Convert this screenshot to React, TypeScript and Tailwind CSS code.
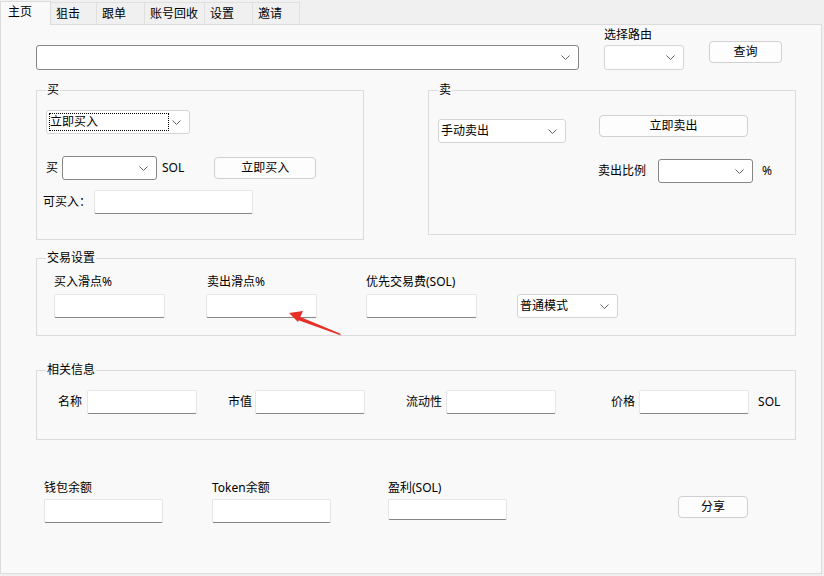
import type { ReactNode } from 'react'

const font = { fontFamily: '"Segoe UI", "Noto Sans", "Noto Sans CJK SC", sans-serif' }

function Chevron() {
  return (
    <svg width="9" height="5" viewBox="0 0 9 5" className="shrink-0">
      <path d="M0.5 0.5 L4.5 4.5 L8.5 0.5" fill="none" stroke="#606060" strokeWidth="1" />
    </svg>
  )
}

// editable combo: darker border; dropdown-list combo: light border
function Combo({ w, h = 24, text, dark, focus }: { w: string; h?: number; text?: string; dark?: boolean; focus?: boolean }) {
  return (
    <div
      className={`${w} ${h === 25 ? 'h-[25px]' : 'h-[24px]'} shrink-0 flex items-center justify-between bg-white rounded-[3px] border pl-[2px] pr-[8px] ${
        dark ? 'border-[#868686]' : 'border-[#d5d5d5]'
      }`}
    >
      {focus ? (
        <span className="h-[18px] w-[120px] border border-dotted border-black flex items-center leading-none">{text}</span>
      ) : (
        <span className="leading-none">{text}</span>
      )}
      <Chevron />
    </div>
  )
}

function Input({ w, short }: { w: string; short?: boolean }) {
  return (
    <div className={`${w} ${short ? 'h-[21px]' : 'h-[24px]'} shrink-0 bg-white border border-[#e6e6e6] border-b-[#858585] rounded-[2px]`} />
  )
}

function Button({ w, children }: { w: string; children: ReactNode }) {
  return (
    <div className={`${w} h-[22px] shrink-0 flex items-center justify-center bg-[#fdfdfd] border border-[#d0d0d0] rounded-[4px]`}>
      {children}
    </div>
  )
}

function Group({ title, className, children }: { title: string; className: string; children: ReactNode }) {
  return (
    <div className={`relative shrink-0 border border-[#dcdcdc] ${className}`}>
      <span className="absolute -top-[9px] left-[9px] px-[1px] bg-[#f9f9f9] leading-[16px]">{title}</span>
      {children}
    </div>
  )
}

const tabs = ['狙击', '跟单', '账号回收', '设置', '邀请']
const tabW = ['w-[46px]', 'w-[48px]', 'w-[60px]', 'w-[48px]', 'w-[47px]']

export default function App() {
  return (
    <div className="relative w-[824px] h-[576px] bg-[#f0f0f0] text-[12px] text-black overflow-hidden" style={font}>
      {/* Tabs */}
      <div className="flex items-end h-[24px]">
        <div className="w-[51px] h-[24px] bg-[#f9f9f9] border border-b-0 border-[#dcdcdc] pl-[7px] pt-[2px] leading-[16px] relative z-10 -mb-[1px]">
          主页
        </div>
        {tabs.map((t, i) => (
          <div key={t} className={`${tabW[i]} h-[22px] border border-l-0 border-b-0 border-[#e0e0e0] pl-[5px] pt-[3px] leading-[16px]`}>
            {t}
          </div>
        ))}
      </div>

      {/* Page */}
      <div className="w-[822px] h-[550px] bg-[#f9f9f9] border border-[#dcdcdc] flex flex-col">
        {/* Address + route */}
        <div className="flex items-start pl-[35px]">
          <div className="mt-[20px]">
            <Combo w="w-[543px]" h={25} dark />
          </div>
          <div className="ml-[25px] flex flex-col">
            <span className="mt-[2px] leading-[16px]">选择路由</span>
            <div className="mt-[2px]">
              <Combo w="w-[80px]" h={25} />
            </div>
          </div>
          <div className="ml-[25px] mt-[16px]">
            <Button w="w-[73px]">查询</Button>
          </div>
        </div>

        {/* Buy / Sell */}
        <div className="flex items-start pl-[35px] mt-[20px]">
          <Group title="买" className="w-[328px] h-[150px] pl-[9px] pt-[19px]">
            <Combo w="w-[144px]" text="立即买入" focus />
            <div className="flex items-center mt-[22px]">
              <span>买</span>
              <div className="ml-[4px]">
                <Combo w="w-[95px]" dark />
              </div>
              <span className="ml-[5px]">SOL</span>
              <div className="ml-[30px]">
                <Button w="w-[102px]">立即买入</Button>
              </div>
            </div>
            <div className="flex items-center mt-[10px] -ml-[3px]">
              <span>可买入：</span>
              <div className="ml-[3px]">
                <Input w="w-[159px]" />
              </div>
            </div>
          </Group>

          <Group title="卖" className="ml-[64px] w-[368px] h-[145px] pl-[9px] pt-[24px]">
            <div className="flex items-start">
              <div className="mt-[4px]">
                <Combo w="w-[128px]" text="手动卖出" />
              </div>
              <div className="ml-[33px]">
                <Button w="w-[149px]">立即卖出</Button>
              </div>
            </div>
            <div className="flex items-center mt-[16px] pl-[160px]">
              <span>卖出比例</span>
              <div className="ml-[12px]">
                <Combo w="w-[95px]" dark />
              </div>
              <span className="ml-[9px]">%</span>
            </div>
          </Group>
        </div>

        {/* Trade settings */}
        <div className="pl-[35px] mt-[18px]">
          <Group title="交易设置" className="w-[760px] h-[78px] pl-[17px] pt-[15px]">
            <div className="flex items-end">
              <div className="flex flex-col">
                <span className="leading-[16px]">买入滑点%</span>
                <div className="mt-[4px]"><Input w="w-[111px]" /></div>
              </div>
              <div className="flex flex-col ml-[41px]">
                <span className="leading-[16px] pl-[1px]">卖出滑点%</span>
                <div className="mt-[4px]"><Input w="w-[111px]" /></div>
              </div>
              <div className="flex flex-col ml-[49px]">
                <span className="leading-[16px]">优先交易费(SOL)</span>
                <div className="mt-[4px]"><Input w="w-[111px]" /></div>
              </div>
              <div className="ml-[40px]">
                <Combo w="w-[101px]" text="普通模式" />
              </div>
            </div>
          </Group>
        </div>

        {/* Info */}
        <div className="pl-[35px] mt-[34px]">
          <Group title="相关信息" className="w-[760px] h-[70px] pl-[21px] pt-[19px]">
            <div className="flex items-center">
              <span>名称</span>
              <div className="ml-[5px]"><Input w="w-[110px]" /></div>
              <span className="ml-[31px]">市值</span>
              <div className="ml-[3px]"><Input w="w-[110px]" /></div>
              <span className="ml-[41px]">流动性</span>
              <div className="ml-[4px]"><Input w="w-[110px]" /></div>
              <span className="ml-[55px]">价格</span>
              <div className="ml-[4px]"><Input w="w-[110px]" /></div>
              <span className="ml-[9px]">SOL</span>
            </div>
          </Group>
        </div>

        {/* Balances */}
        <div className="flex items-start pl-[43px] mt-[40px]">
          <div className="flex flex-col">
            <span className="leading-[16px]">钱包余额</span>
            <div className="mt-[3px]"><Input w="w-[119px]" /></div>
          </div>
          <div className="flex flex-col ml-[49px]">
            <span className="leading-[16px]">Token余额</span>
            <div className="mt-[3px]"><Input w="w-[119px]" /></div>
          </div>
          <div className="flex flex-col ml-[57px]">
            <span className="leading-[16px]">盈利(SOL)</span>
            <div className="mt-[3px]"><Input w="w-[119px]" short /></div>
          </div>
          <div className="ml-[171px] mt-[16px]">
            <Button w="w-[70px]">分享</Button>
          </div>
        </div>
      </div>

      {/* red annotation arrow */}
      <svg className="absolute left-[280px] top-[300px]" width="70" height="40" viewBox="280 300 70 40">
        <path d="M341 335.5 L340 333.5 L298 316 L296.5 319.5 Z" fill="#e53027" />
        <path d="M289 313 L303 311 L298 322 Z" fill="#e53027" />
      </svg>
    </div>
  )
}
